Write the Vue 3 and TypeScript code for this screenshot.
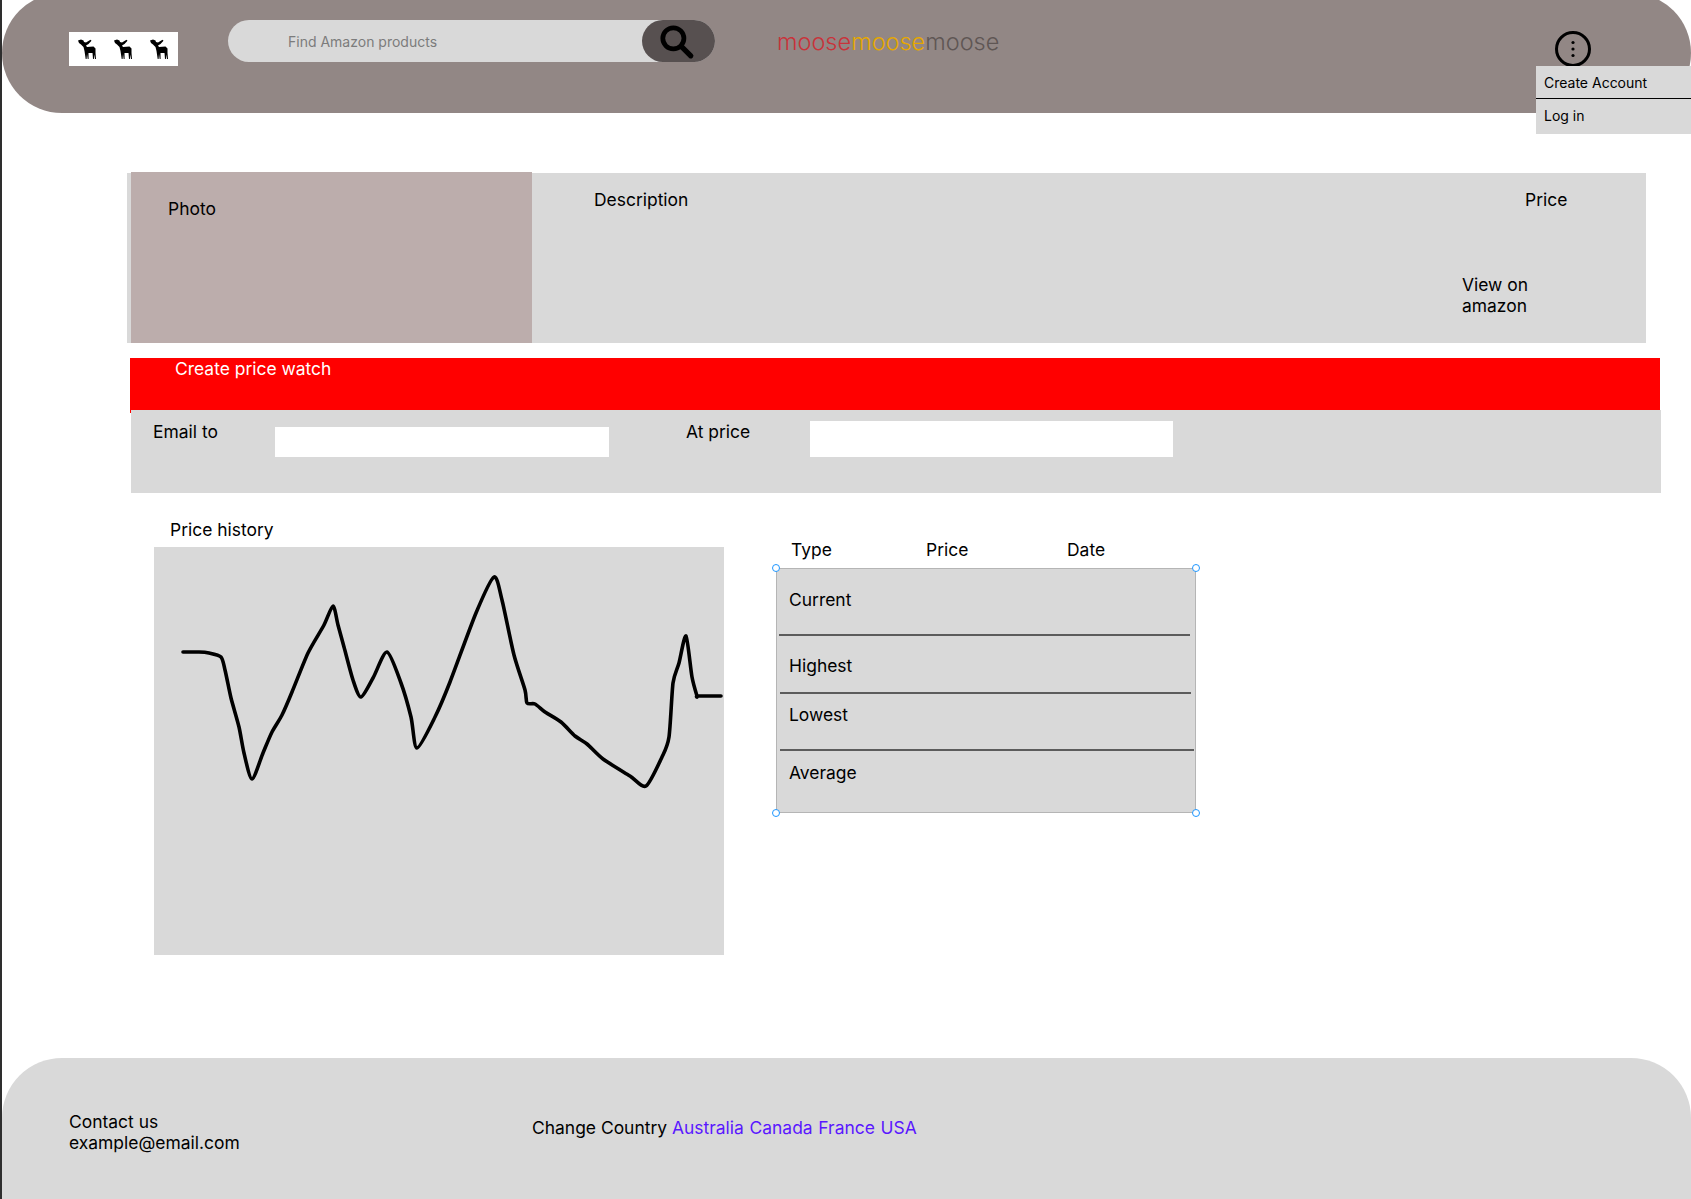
<script setup lang="ts">
const brand = [
  { text: 'moose', color: '#c9333a' },
  { text: 'moose', color: '#e6a700' },
  { text: 'moose', color: '#5f5654' },
]

const rows = ['Current', 'Highest', 'Lowest', 'Average']
const countries = ['Australia', 'Canada', 'France', 'USA']
const handles = ['tl', 'tr', 'bl', 'br']

// hand-drawn line, traced from the mockup
const history: [number, number][] = [
  [29, 105], [45, 105], [55, 106], [67, 110], [71, 123], [77, 151], [85, 180], [90, 206], [98, 232],
  [109, 206], [118, 185], [128, 168], [138, 145], [154, 106], [170, 78], [179, 59], [184, 78], [190, 100],
  [199, 133], [207, 150], [219, 131], [233, 105], [247, 136], [257, 170], [263, 201], [281, 170], [296, 135],
  [322, 66], [340, 30], [348, 53], [360, 108], [371, 143], [373, 156], [381, 157], [391, 165], [407, 175],
  [421, 189], [433, 197], [449, 212], [476, 229], [492, 239], [508, 210], [515, 190], [519, 136], [525, 116],
  [532, 89], [538, 130], [543, 149], [544, 149], [567, 149],
]

// catmull-rom through the traced points so the line stays soft like the sketch
const historyPath = history
  .map(([x, y], i) => {
    if (i === 0) return `M${x} ${y}`
    const [ax, ay] = history[Math.max(i - 2, 0)]
    const [bx, by] = history[i - 1]
    const [dx, dy] = history[Math.min(i + 1, history.length - 1)]
    const k = 1 / 8
    const c1 = `${(bx + (x - ax) * k).toFixed(1)} ${(by + (y - ay) * k).toFixed(1)}`
    const c2 = `${(x - (dx - bx) * k).toFixed(1)} ${(y - (dy - by) * k).toFixed(1)}`
    return `C${c1} ${c2} ${x} ${y}`
  })
  .join(' ')
</script>

<template>
  <div class="page">
    <header class="header">
      <div class="logo">
        <svg v-for="n in 3" :key="n" class="moose" viewBox="0 0 18 20" fill="#000">
          <path d="M0 1.5 L3 .5 L5.5 1.5 L6 3 L8 3.5 L12.5 .8 L13.5 1.8 L10.5 5 L8 6.5 L9 8 L15.5 7.5 L17.5 9.5 L17.5 14 L18 20 L17 20 L16.2 15.5 L15.9 20 L15 20 L14.5 14 L10.5 14 L10.6 20 L9.7 20 L9 15 L8.6 20 L7.7 20 L6.5 12 L5.5 8 L3 5.5 L1 4 Z" />
        </svg>
      </div>
      <div class="search">
        <input class="search-input" type="text" placeholder="Find Amazon products" />
        <button class="search-button" type="button" aria-label="Search">
          <svg width="38" height="38" viewBox="0 0 36 36" fill="none" stroke="#000">
            <circle cx="15.5" cy="15.5" r="10" stroke-width="4.5" />
            <path d="M23 23 L32 32" stroke-width="5" stroke-linecap="round" />
          </svg>
        </button>
      </div>
      <div class="brand">
        <span v-for="(part, i) in brand" :key="i" :style="{ color: part.color }">{{ part.text }}</span>
      </div>
      <div class="account">
        <svg class="kebab" width="38" height="38" viewBox="0 0 38 38" fill="none">
          <circle cx="19" cy="19" r="16.5" stroke="#000" stroke-width="3" />
          <circle cx="19" cy="12.5" r="1.6" fill="#000" />
          <circle cx="19" cy="19" r="1.6" fill="#000" />
          <circle cx="19" cy="25.5" r="1.6" fill="#000" />
        </svg>
        <div class="menu">
          <div class="menu-item menu-item-first">Create Account</div>
          <div class="menu-item">Log in</div>
        </div>
      </div>
    </header>

    <section class="product">
      <div class="photo">Photo</div>
      <div class="description">Description</div>
      <div class="buy">
        <div class="price">Price</div>
        <div class="view">View on<br />amazon</div>
      </div>
    </section>

    <section class="watch">
      <div class="watch-title">Create price watch</div>
      <div class="watch-form">
        <label class="email-label">Email to</label>
        <input class="email-input" type="text" />
        <label class="price-label">At price</label>
        <input class="price-input" type="text" />
      </div>
    </section>

    <section class="history">
      <div class="chart-col">
        <div class="chart-title">Price history</div>
        <svg class="chart" width="570" height="408" viewBox="0 0 570 408">
          <path :d="historyPath" fill="none" stroke="#000" stroke-width="3.6" stroke-linejoin="round" stroke-linecap="round" />
        </svg>
      </div>
      <div class="table-col">
        <div class="table-head">
          <span class="col-type">Type</span>
          <span class="col-price">Price</span>
          <span class="col-date">Date</span>
        </div>
        <div class="table">
          <div v-for="row in rows" :key="row" class="row" :class="'row-' + row.toLowerCase()">{{ row }}</div>
          <i v-for="h in handles" :key="h" class="handle" :class="h"></i>
        </div>
      </div>
    </section>

    <footer class="footer">
      <div class="contact">Contact us<br />example@email.com</div>
      <div class="country">
        Change Country
        <a v-for="c in countries" :key="c" class="country-link">{{ c }}</a>
      </div>
    </footer>
  </div>
</template>

<style scoped>
.page {
  display: flex;
  flex-direction: column;
  box-sizing: border-box;
  width: 1691px;
  height: 1199px;
  overflow: hidden;
  border-left: 2px solid #2e2e2e;
  font-family: Inter, "Liberation Sans", sans-serif;
  font-size: 17.45px;
  line-height: 21px;
  color: #000;
  background: #fff;
}

.header {
  display: flex;
  flex: none;
  align-items: flex-start;
  box-sizing: border-box;
  height: 120px;
  margin-top: -7px;
  padding: 27px 0 0 67px;
  border-radius: 60px;
  background: #928785;
}

.logo {
  display: flex;
  justify-content: space-between;
  box-sizing: border-box;
  width: 109px;
  height: 34px;
  margin-top: 12px;
  padding: 7px 10px 0 9px;
  background: #fff;
}

.moose {
  width: 18px;
  height: 20px;
}

.search {
  display: flex;
  width: 487px;
  height: 42px;
  margin-left: 50px;
  border-radius: 21px;
  background: #d9d9d9;
}

.search-input {
  flex: 1;
  min-width: 0;
  padding: 0 0 0 60px;
  border: 0;
  outline: 0;
  background: transparent;
  font: 14px Inter, "Liberation Sans", sans-serif;
}

.search-input::placeholder {
  color: #7c7c7c;
  opacity: 1;
}

.search-button {
  display: flex;
  align-items: center;
  justify-content: center;
  width: 73px;
  padding: 0 6px 0 0;
  border: 0;
  border-radius: 21px;
  background: #575050;
}

.brand {
  margin: 7px 0 0 62px;
  font-size: 23.5px;
  font-weight: 300;
  line-height: 29px;
}

.account {
  position: relative;
  margin-left: auto;
  width: 155px;
  height: 40px;
  margin-top: 10px;
}

.kebab {
  position: absolute;
  top: 0;
  left: 18px;
}

.menu {
  position: absolute;
  top: 36px;
  left: 0;
  width: 155px;
  background: #d9d9d9;
  font-size: 14px;
  line-height: 17px;
}

.menu-item {
  height: 35px;
  padding: 8px 0 0 8px;
  box-sizing: border-box;
}

.menu-item-first {
  height: 33px;
  border-bottom: 1px solid #000;
}

.product {
  display: flex;
  flex: none;
  width: 1519px;
  height: 170px;
  margin: 60px 0 0 125px;
  background: #d9d9d9;
}

.photo {
  flex: none;
  box-sizing: border-box;
  width: 401px;
  height: 171px;
  margin: -1px 0 0 4px;
  padding: 26px 0 0 37px;
  background: #bcadac;
}

.description {
  flex: 1;
  padding: 16px 0 0 62px;
}

.buy {
  flex: none;
  box-sizing: border-box;
  width: 184px;
  padding-top: 16px;
}

.price {
  padding-left: 63px;
}

.view {
  margin-top: 64px;
}

.watch {
  flex: none;
  width: 1531px;
  margin: 15px 0 0 128px;
}

.watch-title {
  position: relative;
  box-sizing: border-box;
  height: 52px;
  margin-right: 1px;
  padding: 0 0 0 45px;
  background: #f00;
  color: #fff;
}

.watch-title::after {
  content: "";
  position: absolute;
  top: 100%;
  left: 0;
  width: 1px;
  height: 3px;
  background: #f00;
}

.watch-form {
  display: flex;
  align-items: flex-start;
  box-sizing: border-box;
  height: 83px;
  margin-left: 1px;
  padding: 11px 0 0 22px;
  background: #d9d9d9;
}

.email-input,
.price-input {
  box-sizing: border-box;
  padding: 0;
  border: 0;
  outline: 0;
  background: #fff;
}

.email-label {
  width: 122px;
}

.email-input {
  width: 334px;
  height: 30px;
  margin-top: 6px;
}

.price-label {
  width: 124px;
  margin-left: 77px;
}

.price-input {
  width: 363px;
  height: 36px;
}

.history {
  display: flex;
  flex: none;
  margin-top: 24px;
}

.chart-col {
  margin-left: 152px;
}

.chart-title {
  height: 30px;
  padding: 2px 0 0 16px;
  box-sizing: border-box;
}

.chart {
  display: block;
  background: #d9d9d9;
}

.table-col {
  width: 420px;
  margin-left: 52px;
  padding-top: 22px;
}

.table-head {
  display: flex;
  height: 21px;
}

.col-type {
  width: 135px;
  margin-left: 15px;
}

.col-price {
  width: 141px;
}

.table {
  position: relative;
  box-sizing: border-box;
  height: 245px;
  margin-top: 8px;
  border: 1px solid #b5b5b5;
  background: #d9d9d9;
}

.row {
  box-sizing: border-box;
  padding-left: 12px;
  border-bottom: 2px solid #5c5c5c;
}

.row-current {
  height: 67px;
  padding-top: 20px;
  margin-left: 2px;
  margin-right: 5px;
  padding-left: 10px;
}

.row-highest {
  height: 58px;
  padding-top: 19px;
  margin-left: 3px;
  margin-right: 4px;
  padding-left: 9px;
}

.row-lowest {
  height: 57px;
  padding-top: 10px;
  margin-left: 3px;
  margin-right: 1px;
  padding-left: 9px;
}

.row-average {
  padding-top: 11px;
  border-bottom: 0;
}

.handle {
  position: absolute;
  width: 8px;
  height: 8px;
  box-sizing: border-box;
  border: 1.5px solid #1f97ff;
  border-radius: 50%;
  background: #fff;
}

.tl { top: -5px; left: -5px; }
.tr { top: -5px; right: -5px; }
.bl { bottom: -5px; left: -5px; }
.br { bottom: -5px; right: -5px; }

.footer {
  display: flex;
  flex: none;
  box-sizing: border-box;
  height: 180px;
  margin-top: auto;
  margin-bottom: -39px;
  padding: 53px 0 0 67px;
  border-radius: 60px 60px 0 0;
  background: #d9d9d9;
}

.contact {
  width: 463px;
}

.country {
  padding-top: 6px;
}

.country-link {
  color: #5a17ff;
}

.country-link + .country-link {
  margin-left: 5.7px;
}
</style>

<style>
html,
body {
  margin: 0;
  background: #fff;
}
</style>
